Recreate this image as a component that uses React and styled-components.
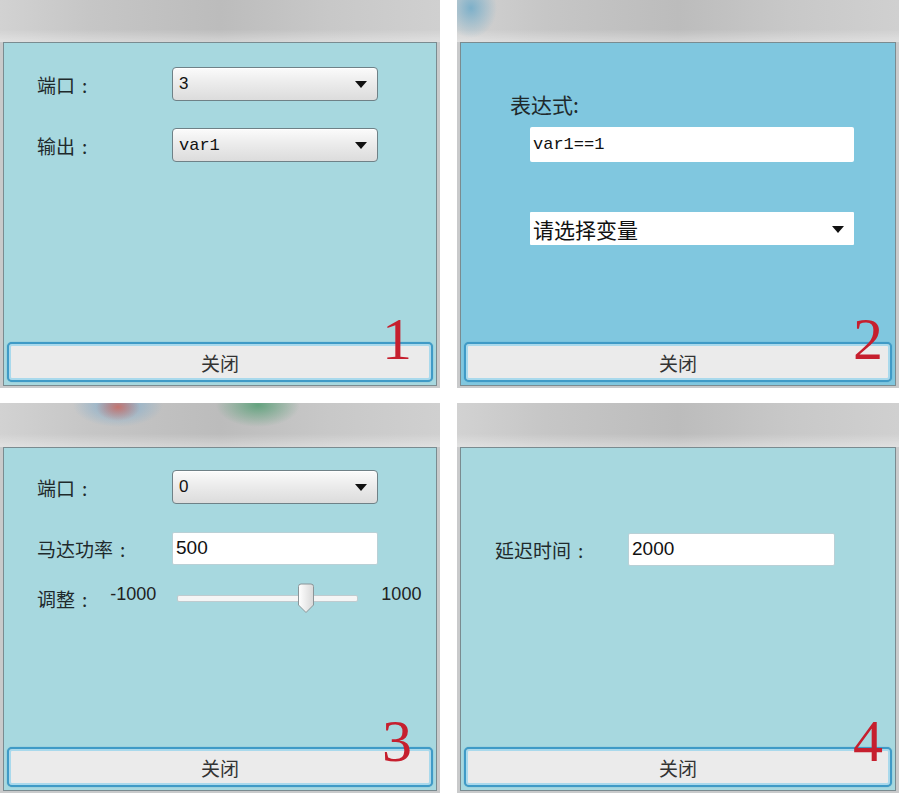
import React from 'react';
import styled, { createGlobalStyle } from 'styled-components';

const GlobalStyle = createGlobalStyle`
    html, body {
        margin: 0;
        padding: 0;
        background: #fff;
    }
    body {
        font-family: "Noto Sans CJK SC", "Liberation Sans", sans-serif;
    }
`

const Page = styled.div`
    width: 899px;
    height: 793px;
    display: grid;
    grid-template-columns: 440px 442px;
    grid-template-rows: 388px 390px;
    column-gap: 17px;
    row-gap: 15px;
    overflow: hidden;
`

const blobs = {
    plain: '',
    blueTop: 'radial-gradient(ellipse 26px 30px at 14px 8px, rgba(110,170,200,0.85), rgba(110,170,200,0) 100%),',
    icons: `radial-gradient(ellipse 22px 14px at 118px 4px, rgba(205,110,100,0.9), rgba(205,110,100,0) 100%),
            radial-gradient(ellipse 45px 22px at 118px 2px, rgba(120,170,205,0.9), rgba(120,170,205,0) 100%),
            radial-gradient(ellipse 42px 22px at 258px 2px, rgba(90,160,120,0.9), rgba(90,160,120,0) 100%),`,
}

const Window = styled.div`
    display: flex;
    flex-direction: column;
    background: #c9cacb;
    padding: 0 3px 2px 3px;
`

const Header = styled.div`
    height: ${p => p.h}px;
    margin: 0 -3px;
    flex-shrink: 0;
    background:
        ${p => blobs[p.blob || 'plain']}
        linear-gradient(to bottom, rgba(255,255,255,0) 70%, rgba(255,255,255,0.35) 100%),
        linear-gradient(to right, #d2d2d2 0%, #c6c6c6 20%, #bcbcbc 50%, #c8c8c8 75%, #d0d0d0 100%);
`

const Panel = styled.div`
    position: relative;
    flex: 1;
    display: flex;
    flex-direction: column;
    background: ${p => p.bg};
    border: 1px solid #7a8b90;
`

const Body = styled.div`
    flex: 1;
    padding: ${p => p.pad};
    display: flex;
    flex-direction: column;
`

const Fields = styled.div`
    display: grid;
    grid-template-columns: ${p => p.labelW}px 206px;
    grid-auto-rows: 34px;
    row-gap: 27px;
    align-items: center;
`

const LabelText = styled.span`
    font-family: "Noto Sans CJK SC", sans-serif;
    font-size: ${p => p.size || 19}px;
    color: #1f2a2c;
    white-space: nowrap;
`

const Colon = styled.span`
    margin-left: 7px;
`

const Label = ({children, ...rest}) => (
    <LabelText {...rest}>{children}<Colon>:</Colon></LabelText>
)

const Select = styled.div`
    position: relative;
    height: ${p => p.h || 34}px;
    box-sizing: border-box;
    display: flex;
    align-items: center;
    padding-left: ${p => p.flat ? 3 : 6}px;
    border: ${p => p.flat ? 'none' : '1px solid #6f8187'};
    border-radius: ${p => p.flat ? 1 : 4}px;
    background: ${p => p.flat ? '#fff' : 'linear-gradient(to bottom, #fbfbfb 0%, #ececec 45%, #dcdcdc 100%)'};
    box-shadow: ${p => p.flat ? 'none' : 'inset 0 1px 0 #fff'};
    font-family: ${p => p.mono ? '"Liberation Mono", monospace' : p.cjk ? '"Noto Sans CJK SC", sans-serif' : '"Liberation Sans", sans-serif'};
    font-size: ${p => p.cjk ? 21 : 17}px;
    color: #111;
`

const Arrow = styled.span`
    position: absolute;
    right: 10px;
    top: 50%;
    margin-top: -3px;
    width: 0;
    height: 0;
    border-left: 6px solid transparent;
    border-right: 6px solid transparent;
    border-top: 7px solid #111;
`

const TextInput = styled.div`
    height: ${p => p.h || 33}px;
    width: ${p => p.w ? p.w + 'px' : 'auto'};
    box-sizing: border-box;
    display: flex;
    align-items: center;
    padding-left: 3px;
    background: #fff;
    border: ${p => p.flat ? 'none' : '1px solid #b9d0d6'};
    border-radius: 2px;
    font-family: ${p => p.mono ? '"Liberation Mono", monospace' : '"Liberation Sans", sans-serif'};
    font-size: ${p => p.mono ? 17 : 19}px;
    color: #111;
`

const Expression = styled.div`
    display: flex;
    flex-direction: column;
    margin-left: 20px;
    width: 324px;
`

const SliderRow = styled.div`
    display: flex;
    align-items: center;
    height: 30px;
    margin-top: 18px;
`

const RangeText = styled.span`
    align-self: flex-start;
    margin-top: 1px;
    margin-left: ${p => p.ml || 0}px;
    font-family: "Liberation Sans", sans-serif;
    font-size: 18px;
    color: #222;
`

const Track = styled.div`
    position: relative;
    width: 179px;
    height: 5px;
    margin: 0 23px 0 21px;
    background: #f5f5f5;
    border: 1px solid #bfcbcf;
    border-radius: 2px;
`

const Thumb = styled.svg`
    position: absolute;
    left: 119px;
    top: -13px;
`

const CloseButton = styled.button`
    margin: 0 3px 3px 3px;
    height: 40px;
    border: 2px solid #3f9ac6;
    border-radius: 5px;
    background: #ebebeb;
    box-shadow: inset 0 0 0 2px #a9d9ec, 0 0 1px #3f9ac6;
    font-family: "Noto Sans CJK SC", sans-serif;
    font-size: 19px;
    color: #333;
    padding: 0;
`

const Tag = styled.span`
    position: absolute;
    right: ${p => p.right}px;
    bottom: ${p => p.bottom}px;
    font-family: "Liberation Serif", serif;
    font-size: 60px;
    line-height: 1;
    color: #c61f2e;
    pointer-events: none;
`

const Dropdown = ({children, ...rest}) => (
    <Select {...rest}>
        {children}
        <Arrow/>
    </Select>
)

const Close = () => <CloseButton>关闭</CloseButton>

export default function App() {
    return (
        <>
            <GlobalStyle/>
            <Page>
                {/* 1 */}
                <Window>
                    <Header h={42}/>
                    <Panel bg="#a7d8df">
                        <Body pad="24px 0 0 33px">
                            <Fields labelW={135}>
                                <Label>端口</Label>
                                <Dropdown>3</Dropdown>
                                <Label>输出</Label>
                                <Dropdown mono>var1</Dropdown>
                            </Fields>
                        </Body>
                        <Close/>
                        <Tag right={24} bottom={16}>1</Tag>
                    </Panel>
                </Window>

                {/* 2 */}
                <Window>
                    <Header h={42} blob="blueTop"/>
                    <Panel bg="#80c7df">
                        <Body pad="46px 0 0 49px">
                            <LabelText size={21}>表达式:</LabelText>
                            <Expression>
                                <TextInput flat mono h={35} style={{marginTop: 8}}>var1==1</TextInput>
                                <Dropdown flat cjk h={33} style={{marginTop: 50}}>请选择变量</Dropdown>
                            </Expression>
                        </Body>
                        <Close/>
                        <Tag right={12} bottom={16}>2</Tag>
                    </Panel>
                </Window>

                {/* 3 */}
                <Window>
                    <Header h={44} blob="icons"/>
                    <Panel bg="#a7d8df">
                        <Body pad="22px 0 0 33px">
                            <Fields labelW={135}>
                                <Label>端口</Label>
                                <Dropdown>0</Dropdown>
                                <Label>马达功率</Label>
                                <TextInput>500</TextInput>
                            </Fields>
                            <SliderRow>
                                <Label>调整</Label>
                                <RangeText ml={23}>-1000</RangeText>
                                <Track>
                                    <Thumb width="18" height="31" viewBox="0 0 18 31">
                                        <defs>
                                            <linearGradient id="thumbFill" x1="0" y1="0" x2="1" y2="0">
                                                <stop offset="0" stopColor="#ffffff"/>
                                                <stop offset="1" stopColor="#d8d8d8"/>
                                            </linearGradient>
                                        </defs>
                                        <path d="M1.5 3.5 Q1.5 1 4 1 H14 Q16.5 1 16.5 3.5 V22 L9 29.5 L1.5 22 Z"
                                              fill="url(#thumbFill)" stroke="#8b9598" strokeWidth="1"/>
                                    </Thumb>
                                </Track>
                                <RangeText>1000</RangeText>
                            </SliderRow>
                        </Body>
                        <Close/>
                        <Tag right={24} bottom={19}>3</Tag>
                    </Panel>
                </Window>

                {/* 4 */}
                <Window>
                    <Header h={44}/>
                    <Panel bg="#a7d8df">
                        <Body pad="84px 0 0 34px">
                            <Fields labelW={133}>
                                <Label>延迟时间</Label>
                                <TextInput style={{width: 207}}>2000</TextInput>
                            </Fields>
                        </Body>
                        <Close/>
                        <Tag right={12} bottom={19}>4</Tag>
                    </Panel>
                </Window>
            </Page>
        </>
    )
}
